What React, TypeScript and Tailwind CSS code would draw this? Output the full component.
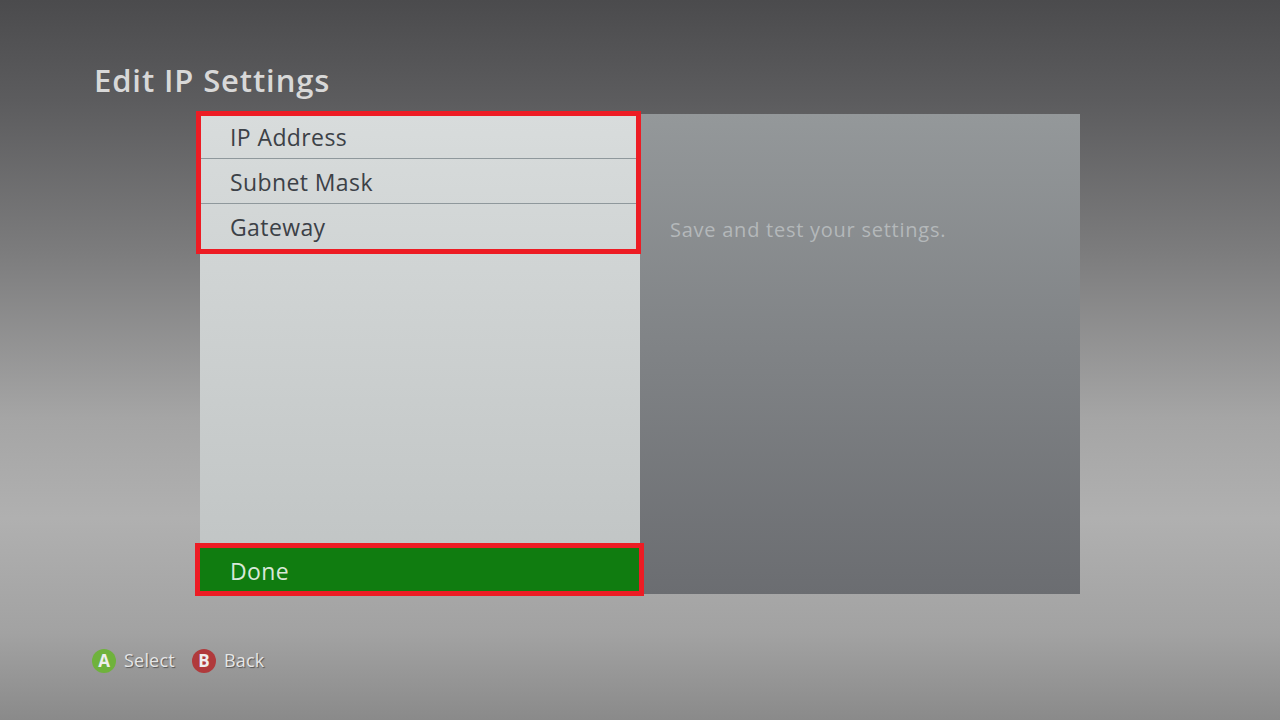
import React from 'react';

const FONT = "font-['Open_Sans','Noto_Sans',sans-serif]";

const ListRow = ({ label, last }: { label: string; last?: boolean }) => (
    <div className={`flex h-[45px] items-center pl-[30px] text-[23px] tracking-[0.4px] text-[#3c4147] ${last ? 'pt-[1px]' : 'border-b border-[#8f989c] pt-[3px]'}`}>
        {label}
    </div>
);

const Hint = ({ letter, label, color }: { letter: string; label: string; color: string }) => (
    <div className="flex items-center gap-[8px]">
        <div className={`flex h-[24px] w-[24px] items-center justify-center rounded-full text-[17px] font-bold text-[#eeeeee] ${color}`}>
            {letter}
        </div>
        <span className="text-[18px] tracking-[0.2px] text-[#e6e6e6] [text-shadow:1px_1px_1px_#555555]">{label}</span>
    </div>
);

export default function App() {
    return (
        <div className={`flex h-[720px] w-[1280px] flex-col overflow-hidden bg-[linear-gradient(180deg,#4b4b4d_0%,#5c5c5e_14%,#7c7c7d_35%,#a5a5a5_58%,#b0b0b0_72%,#a2a2a2_88%,#8a8a8a_100%)] ${FONT}`}>
            <h1 className="ml-[94px] mt-[58px] h-[42px] text-[31px] font-semibold leading-[44px] tracking-[0.88px] text-[#d8d8d8]">
                Edit IP Settings
            </h1>
            <div className="ml-[200px] mt-[14px] flex h-[480px] w-[880px]">
                <div className="flex w-[440px] flex-col bg-[linear-gradient(180deg,#d8dcdc_0%,#bfc3c3_100%)]">
                    <div className="relative">
                        <ListRow label="IP Address" />
                        <ListRow label="Subnet Mask" />
                        <ListRow label="Gateway" last />
                        <div className="absolute -left-[4px] -top-[3px] bottom-[-5px] right-[-1px] border-[5px] border-[#ed1c24]" />
                    </div>
                    <div className="relative mt-auto flex h-[46px] items-center bg-[#107c10] pl-[30px] pt-[1px] text-[23px] tracking-[0.4px] text-[#d8e8d8]">
                        Done
                        <div className="absolute -left-[5px] -top-[5px] bottom-[-2px] right-[-4px] border-[5px] border-[#ed1c24]" />
                    </div>
                </div>
                <div className="w-[440px] bg-[linear-gradient(180deg,#94989a_0%,#6b6d71_100%)] pl-[30px] pt-[101px] text-[20px] leading-[30px] tracking-[0.75px] text-[#b4b8ba]">
                    Save and test your settings.
                </div>
            </div>
            <div className="ml-[92px] mt-[53px] flex gap-[17px]">
                <Hint letter="A" label="Select" color="bg-[#6fb23c]" />
                <Hint letter="B" label="Back" color="bg-[#b03a3c]" />
            </div>
        </div>
    );
}
